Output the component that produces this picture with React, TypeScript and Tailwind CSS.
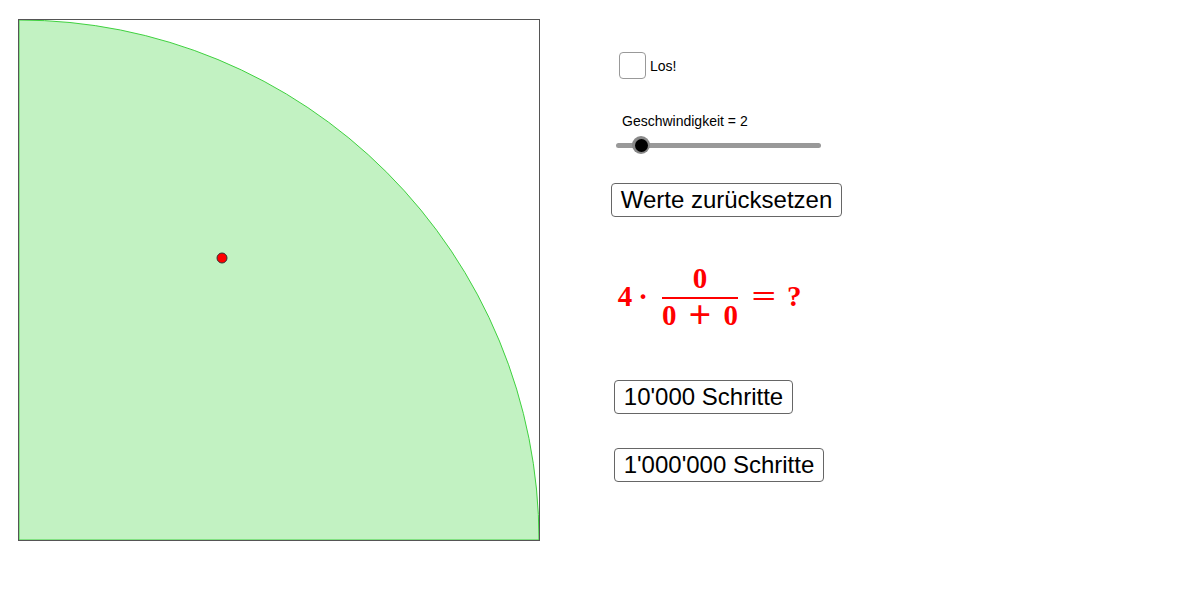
import { useState } from 'react'

const Button = ({ label, className }: { label: string; className?: string }) => (
  <button
    className={`h-[34px] self-start rounded-[4px] border border-[#666] bg-white text-[24px] leading-none text-black ${className ?? ''}`}
  >
    {label}
  </button>
)

const Formula = () => (
  <div className="ml-[4px] flex h-[76px] items-center text-[29px] font-bold leading-[28px] text-[#ff0000] [font-family:'Liberation_Serif',serif]">
    <span className="w-[20px] text-center">4</span>
    <span className="w-[16px] text-center">·</span>
    <div className="ml-[11px] flex w-[76px] flex-col">
      <span className="text-center">0</span>
      <div className="mt-[5px] h-[2px] bg-[#ff0000]" />
      <div className="mt-[2px] flex items-center justify-between">
        <span>0</span>
        <span className="text-[40px]">+</span>
        <span>0</span>
      </div>
    </div>
    <span className="ml-[14px] w-[24px] scale-x-150 text-center">=</span>
    <span className="ml-[11px] w-[14px] text-center">?</span>
  </div>
)

const App = () => {
  const [checked, setChecked] = useState(false)

  return (
    <div className="flex h-[600px] w-[1200px] bg-white pl-[18px] pt-[19px] [font-family:'Liberation_Sans',Arial,sans-serif]">
      <div className="h-[522px] w-[522px] border border-[#555]">
        <svg width="520" height="520" viewBox="0 0 520 520" className="block">
          <path d="M0,0 A520,520 0 0 1 520,520 L0,520 Z" fill="#c2f2c2" stroke="#3fd13f" strokeWidth="1" />
          <circle cx="203" cy="238" r="5" fill="#ff0000" stroke="#333" strokeWidth="1" />
        </svg>
      </div>

      <div className="ml-[71px] flex flex-col">
        <div className="mt-[33px] ml-[8px] flex items-center">
          <button
            onClick={() => setChecked(!checked)}
            className="h-[27px] w-[27px] rounded-[4px] border border-[#999] bg-white"
          />
          <span className="ml-[4px] text-[14px] leading-[16px] text-black">Los!</span>
        </div>

        <span className="mt-[34px] ml-[11px] text-[14px] leading-[16px] text-black">Geschwindigkeit = 2</span>

        <div className="relative mt-[6px] ml-[5px] flex h-[20px] w-[205px] items-center">
          <div className="h-[5px] w-full rounded-full bg-[#999]" />
          <div className="absolute left-[16px] top-[1px] flex h-[18px] w-[18px] items-center justify-center rounded-full bg-[#888]">
            <div className="h-[13px] w-[13px] rounded-full bg-black" />
          </div>
        </div>

        <Button label="Werte zurücksetzen" className="mt-[28px] w-[231px]" />

        <div className="mt-[41px]">
          <Formula />
        </div>

        <Button label="10'000 Schritte" className="mt-[46px] ml-[3px] w-[179px]" />
        <Button label="1'000'000 Schritte" className="mt-[34px] ml-[3px] w-[210px]" />
      </div>
    </div>
  )
}

export default App
